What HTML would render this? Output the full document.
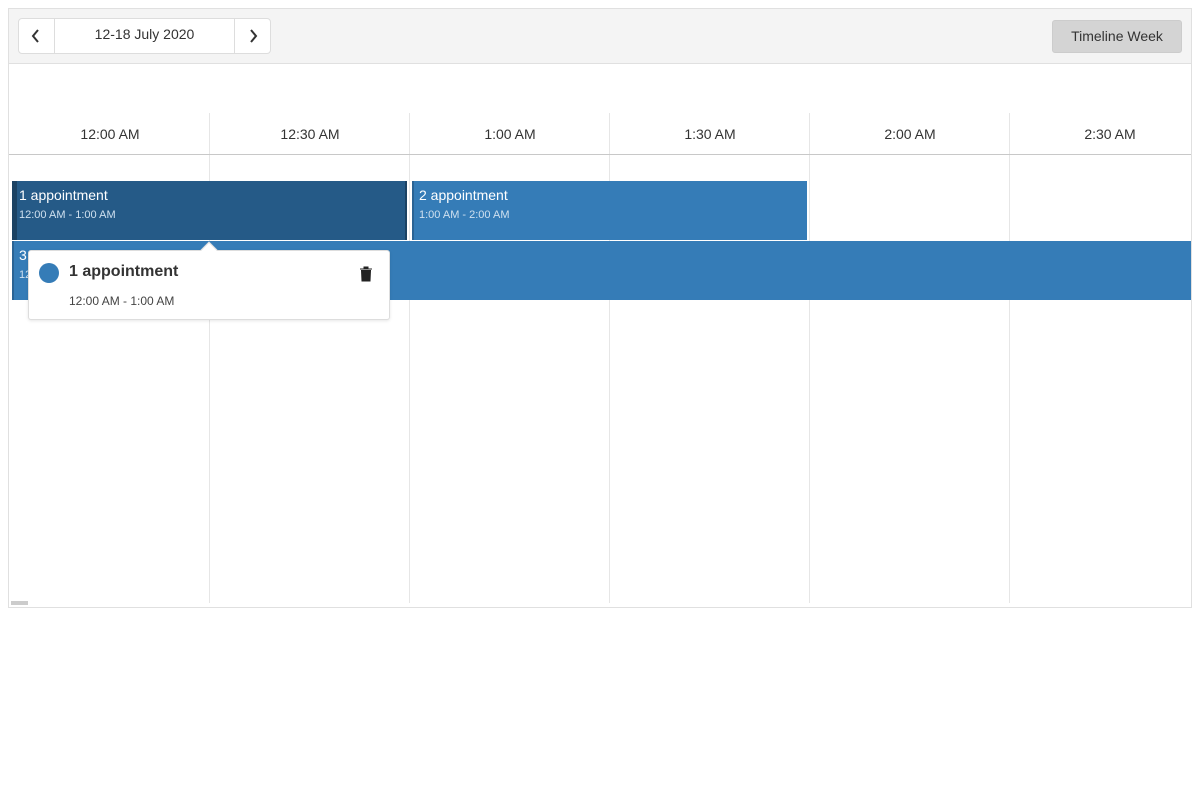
<!DOCTYPE html>
<html><head><style>
*{box-sizing:border-box;margin:0;padding:0}
body{width:1200px;height:800px;background:#fff;font-family:"Liberation Sans",sans-serif;position:relative;overflow:hidden;color:#333}
.abs{position:absolute}
.box{left:8px;top:8px;width:1184px;height:600px;border:1px solid #e0e0e0}
.tb{left:9px;top:9px;width:1182px;height:55px;background:#f4f4f4;border-bottom:1px solid #e0e0e0}
.nav{left:18px;top:18px;width:253px;height:36px;border:1px solid #ddd;border-radius:4px;background:#fff}
.vl{width:1px;background:#e6e6e6}
.hd{top:126px;font-size:14px;width:200px;text-align:center}
.ap{color:#fff;font-size:14px;padding:6px 0 0 7px}
.ap small{display:block;font-size:11px;color:#cfe0ef;margin-top:6px}
</style></head><body>
<div class="abs box"></div>
<div class="abs tb"></div>
<div class="abs nav">
 <div class="abs" style="left:35px;top:0;width:1px;height:34px;background:#ddd"></div>
 <div class="abs" style="left:215px;top:0;width:1px;height:34px;background:#ddd"></div>
 <svg class="abs" style="left:10px;top:8px" width="14" height="18"><path d="M9 3L4 9L9 15" stroke="#333" stroke-width="2" fill="none"/></svg>
 <svg class="abs" style="left:227px;top:8px" width="14" height="18"><path d="M5 3L10 9L5 15" stroke="#333" stroke-width="2" fill="none"/></svg>
 <div class="abs" style="left:36px;top:7px;width:179px;text-align:center;font-size:14px">12-18 July 2020</div>
</div>
<div class="abs" style="left:1052px;top:20px;width:130px;height:33px;background:#d4d4d4;border:1px solid #ccc;border-radius:3px;font-size:14px;text-align:center;line-height:31px">Timeline Week</div>
<div class="abs vl" style="left:209px;top:113px;height:490px"></div>
<div class="abs vl" style="left:409px;top:113px;height:490px"></div>
<div class="abs vl" style="left:609px;top:113px;height:490px"></div>
<div class="abs vl" style="left:809px;top:113px;height:490px"></div>
<div class="abs vl" style="left:1009px;top:113px;height:490px"></div>
<div class="abs" style="left:9px;top:154px;width:1182px;height:1px;background:#c8c8c8"></div>
<div class="abs hd" style="left:10px">12:00 AM</div>
<div class="abs hd" style="left:210px">12:30 AM</div>
<div class="abs hd" style="left:410px">1:00 AM</div>
<div class="abs hd" style="left:610px">1:30 AM</div>
<div class="abs hd" style="left:810px">2:00 AM</div>
<div class="abs hd" style="left:1010px">2:30 AM</div>
<div class="abs ap" style="left:12px;top:181px;width:395px;height:59px;background:#255a87;border-left:5px solid #1b4263;border-right:2px solid #1b4263;padding-left:2px">1 appointment<small>12:00 AM - 1:00 AM</small></div>
<div class="abs ap" style="left:412px;top:181px;width:395px;height:59px;background:#357cb7;border-left:2px solid #2a6394;padding-left:5px">2 appointment<small>1:00 AM - 2:00 AM</small></div>
<div class="abs ap" style="left:12px;top:241px;width:1179px;height:59px;background:#357cb7;border-left:2px solid #2a6394;padding-left:5px">3 appointment<small>12:00 AM - 3:00 AM</small></div>
<div class="abs" style="left:11px;top:601px;width:17px;height:4px;background:#ccc"></div>
<div class="abs" style="left:28px;top:250px;width:362px;height:70px;background:#fff;border:1px solid #ddd;border-radius:3px;box-shadow:0 1px 3px rgba(0,0,0,.1)">
 <div class="abs" style="left:174px;top:-7px;width:12px;height:12px;background:#fff;transform:rotate(45deg);border-left:1px solid #ddd;border-top:1px solid #ddd"></div>
 <div class="abs" style="left:10px;top:12px;width:20px;height:20px;border-radius:50%;background:#357cb7"></div>
 <div class="abs" style="left:40px;top:12px;font-size:16px;font-weight:bold">1 appointment</div>
 <svg class="abs" style="left:330px;top:15px" width="14" height="16"><path d="M1 3H13M5 3V1H9V3M2.5 4.5H11.5L11 15H3Z" fill="#222" stroke="#222" stroke-width="1"/></svg>
 <div class="abs" style="left:40px;top:43px;font-size:12px;color:#444">12:00 AM - 1:00 AM</div>
</div>
</body></html>
